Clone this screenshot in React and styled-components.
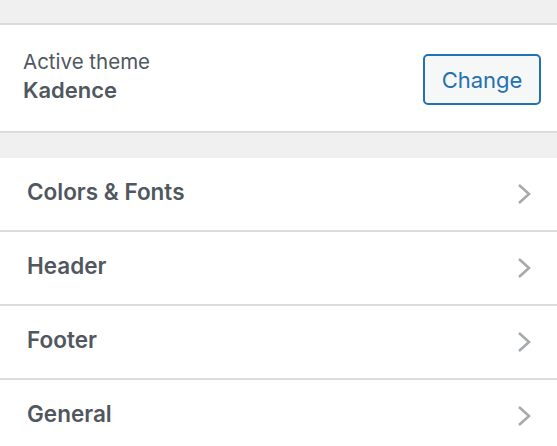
import React from 'react'
import styled, { createGlobalStyle } from 'styled-components'

const GlobalStyle = createGlobalStyle`
  html, body {
    margin: 0;
    padding: 0;
    background: #f0f0f1;
    font-family: Inter, "Liberation Sans", sans-serif;
    color: #50575e;
  }
`

// styling
const Panel = styled.div`
  width: 557px;
  padding-top: 23px;
`

const ThemeInfo = styled.section`
  display: flex;
  align-items: center;
  justify-content: space-between;
  height: 106px;
  padding: 0 16px 0 23px;
  background: #fff;
  border-top: 2px solid #dcdcde;
  border-bottom: 2px solid #dcdcde;
`

const ThemeText = styled.div`
  display: flex;
  flex-direction: column;
  line-height: 28px;
  margin-bottom: 4px;
`

const Label = styled.span`
  font-size: 20.5px;
  font-weight: 400;
`

const ThemeName = styled.strong`
  font-size: 22px;
  font-weight: 600;
`

const ChangeButton = styled.button`
  width: 118px;
  height: 51px;
  margin-top: 3px;
  padding: 0;
  font-family: inherit;
  font-size: 22px;
  color: #2271b1;
  background: #f6f7f7;
  border: 2px solid #2271b1;
  border-radius: 5px;
  cursor: pointer;
`

const Menu = styled.ul`
  list-style: none;
  margin: 25px 0 0;
  padding: 0;
`

const MenuItem = styled.li`
  display: flex;
  align-items: center;
  justify-content: space-between;
  height: 72px;
  padding: 0 26px 0 27px;
  background: #fff;
  border-bottom: 2px solid #dcdcde;
  font-size: 22.5px;
  font-weight: 600;
  line-height: 1;
  cursor: pointer;
`

const Title = styled.span`
  margin-bottom: 3px;
`

const Chevron = styled.svg`
  width: 14px;
  height: 22px;
  flex-shrink: 0;
`
//endstyling

const sections = ['Colors & Fonts', 'Header', 'Footer', 'General']

const App = () => {
  return (
    <>
      <GlobalStyle />
      <Panel>
        <ThemeInfo>
          <ThemeText>
            <Label>Active theme</Label>
            <ThemeName>Kadence</ThemeName>
          </ThemeText>
          <ChangeButton>Change</ChangeButton>
        </ThemeInfo>
        <Menu>
          {sections.map((name) => (
            <MenuItem key={name}>
              <Title>{name}</Title>
              <Chevron viewBox='0 0 14 22' fill='none'>
                <path
                  d='M2 2 L12 11 L2 20'
                  stroke='#a7aaad'
                  strokeWidth='2.6'
                />
              </Chevron>
            </MenuItem>
          ))}
        </Menu>
      </Panel>
    </>
  )
}

export default App
